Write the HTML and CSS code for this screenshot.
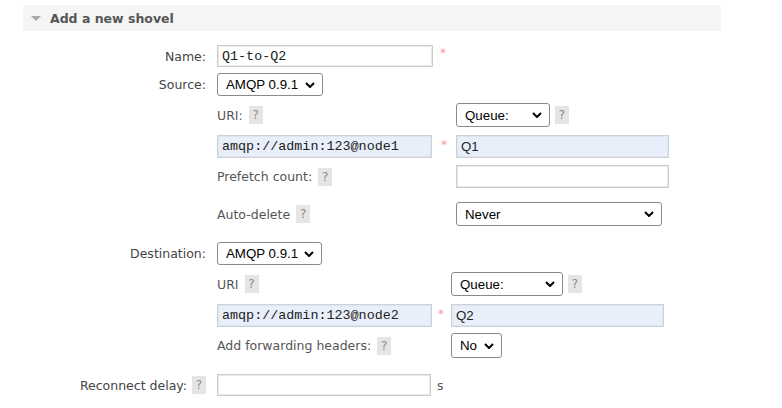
FILE: index.html
```html
<!DOCTYPE html>
<html>
<head>
<meta charset="utf-8">
<link rel="stylesheet" href="styles.css">
</head>
<body>
<div class="section">
  <div class="section-head"><span class="tri"></span><h2>Add a new shovel</h2></div>
  <div class="form">
    <div class="row r-name">
      <label class="lbl">Name:</label>
      <input class="txt mono w216" type="text" value="Q1-to-Q2">
      <span class="star s-name">*</span>
    </div>
    <div class="row r-source">
      <label class="lbl">Source:</label>
      <span class="sel w106"><select><option>AMQP 0.9.1</option></select><svg class="chev" viewBox="0 0 10 6"><path d="M1 1l4 4 4-4" fill="none" stroke="#000" stroke-width="2"/></svg></span>
    </div>
    <div class="sub src">
      <div class="srow h24">
        <div class="c1"><span class="slbl">URI:</span><span class="help">?</span></div>
        <div class="c2"></div>
        <div class="c3"><span class="sel w94"><select><option>Queue:</option></select><svg class="chev" viewBox="0 0 10 6"><path d="M1 1l4 4 4-4" fill="none" stroke="#000" stroke-width="2"/></svg></span><span class="help hq">?</span></div>
      </div>
      <div class="srow m8">
        <div class="c1"><input class="txt mono blue w215" type="text" value="amqp://admin:123@node1"></div>
        <div class="c2"><span class="star">*</span></div>
        <div class="c3"><input class="txt sans blue w213" type="text" value="Q1"></div>
      </div>
      <div class="srow m7">
        <div class="c1"><span class="slbl">Prefetch count:</span><span class="help">?</span></div>
        <div class="c2"></div>
        <div class="c3"><input class="txt w213" type="text" value=""></div>
      </div>
      <div class="srow m14">
        <div class="c1"><span class="slbl">Auto-delete</span><span class="help">?</span></div>
        <div class="c2"></div>
        <div class="c3"><span class="sel w206"><select><option>Never</option></select><svg class="chev" viewBox="0 0 10 6"><path d="M1 1l4 4 4-4" fill="none" stroke="#000" stroke-width="2"/></svg></span></div>
      </div>
    </div>
    <div class="row r-dest">
      <label class="lbl">Destination:</label>
      <span class="sel w105"><select><option>AMQP 0.9.1</option></select><svg class="chev" viewBox="0 0 10 6"><path d="M1 1l4 4 4-4" fill="none" stroke="#000" stroke-width="2"/></svg></span>
    </div>
    <div class="sub dst">
      <div class="srow h24">
        <div class="c1"><span class="slbl">URI</span><span class="help">?</span></div>
        <div class="c2"></div>
        <div class="c3"><span class="sel w112"><select><option>Queue:</option></select><svg class="chev" viewBox="0 0 10 6"><path d="M1 1l4 4 4-4" fill="none" stroke="#000" stroke-width="2"/></svg></span><span class="help hq">?</span></div>
      </div>
      <div class="srow m8">
        <div class="c1"><input class="txt mono blue w215" type="text" value="amqp://admin:123@node2"></div>
        <div class="c2"><span class="star">*</span></div>
        <div class="c3"><input class="txt sans blue w213" type="text" value="Q2"></div>
      </div>
      <div class="srow m6">
        <div class="c1"><span class="slbl">Add forwarding headers:</span><span class="help">?</span></div>
        <div class="c2"></div>
        <div class="c3"><span class="sel w51 h25"><select><option>No</option></select><svg class="chev" viewBox="0 0 10 6"><path d="M1 1l4 4 4-4" fill="none" stroke="#000" stroke-width="2"/></svg></span></div>
      </div>
    </div>
    <div class="row r-delay">
      <label class="lbl">Reconnect delay:<span class="help hl">?</span></label>
      <input class="txt w214" type="text" value="">
      <span class="unit">s</span>
    </div>
  </div>
</div>
</body>
</html>
```
FILE: styles.css
```css
html, body {
  margin: 0;
  padding: 0;
  background: #fff;
}
body {
  font-family: "DejaVu Sans", Verdana, sans-serif;
  font-size: 12.5px;
  color: #444;
}
.section {
  margin: 5px 0 0 23px;
  width: 698px;
}
.section-head {
  height: 26px;
  background: #f5f5f5;
  display: flex;
  align-items: center;
  padding-left: 8px;
  gap: 9px;
}
.tri {
  width: 0;
  height: 0;
  border-left: 5px solid transparent;
  border-right: 5px solid transparent;
  border-top: 5px solid #aaa;
  margin-top: 1px;
}
h2 {
  margin: 0;
  font-size: 12.5px;
  font-weight: bold;
  color: #555;
}
.form {
  padding-top: 14px;
}
.row {
  display: flex;
  align-items: center;
}
.lbl {
  width: 183px;
  margin-right: 11px;
  text-align: right;
  flex: none;
  display: flex;
  justify-content: flex-end;
  align-items: center;
}
.r-source { margin-top: 6px; }
.r-dest { margin-top: 16px; }
.r-delay { margin-top: 16px; }
.sub {
  margin-left: 194px;
  margin-top: 7px;
}
.srow {
  display: flex;
  align-items: center;
}
.h24 { height: 24px; }
.m6 { margin-top: 6px; }
.m7 { margin-top: 7px; }
.m8 { margin-top: 8px; }
.m14 { margin-top: 14px; }
.c1 {
  width: 215px;
  flex: none;
  display: flex;
  align-items: center;
}
.c2 {
  flex: none;
  display: flex;
  align-items: center;
}
.src .c2 { width: 24px; }
.dst .c2 { width: 19px; }
.c3 {
  display: flex;
  align-items: center;
}
.slbl {
  color: #555;
}
.help {
  display: inline-flex;
  align-items: center;
  justify-content: center;
  width: 14px;
  height: 18px;
  background: #e5e5e5;
  color: #8c8c8c;
  margin-left: 6px;
  font-size: 12px;
}
.hq { margin-left: 5px; }
.hl { margin-left: 5px; }
.txt {
  box-sizing: border-box;
  height: 23px;
  border: 1px solid #ccc;
  box-shadow: inset 0 0 0 1px #eaeaea;
  background: #fff;
  padding: 0 4px;
  margin: 0;
  outline: none;
  color: #222;
  font-size: 13.3px;
  font-family: "Liberation Sans", Arial, sans-serif;
}
.mono {
  font-family: "Liberation Mono", "Courier New", monospace;
  font-size: 13.4px;
}
.sans {
  font-family: "Liberation Sans", Arial, sans-serif;
}
.blue {
  background: #e8effb;
  border-color: #cdd2da;
  box-shadow: inset 0 0 0 1px #dfe5ef;
}
.w213 { width: 213px; }
.w214 { width: 214px; height: 22px; }
.w215 { width: 215px; }
.w216 { width: 216px; height: 22px; }
.star {
  color: #f99;
  font-size: 12px;
}
.s-name { margin-left: 7px; margin-top: -6px; }
.c2 .star { margin-left: 9px; margin-top: -4px; }
.dst .c2 .star { margin-left: 6px; }
.unit {
  margin-left: 6px;
  color: #555;
}
.sel {
  position: relative;
  display: inline-block;
  height: 24px;
}
.sel select {
  appearance: none;
  -webkit-appearance: none;
  box-sizing: border-box;
  width: 100%;
  height: 100%;
  margin: 0;
  border: 1px solid #8a8a8a;
  border-radius: 3px;
  background: #fff;
  color: #000;
  font-family: "Liberation Sans", Arial, sans-serif;
  font-size: 13.3px;
  padding: 0 0 0 8px;
  outline: none;
}
.sel .chev {
  position: absolute;
  right: 8px;
  top: 50%;
  width: 10px;
  height: 6px;
  margin-top: -3px;
  pointer-events: none;
}
.w94 { width: 94px; }
.w105 { width: 105px; height: 23px; }
.w106 { width: 106px; height: 23px; }
.w112 { width: 112px; }
.w206 { width: 206px; }
.w51 { width: 51px; }
.h25 { height: 25px; }
```
